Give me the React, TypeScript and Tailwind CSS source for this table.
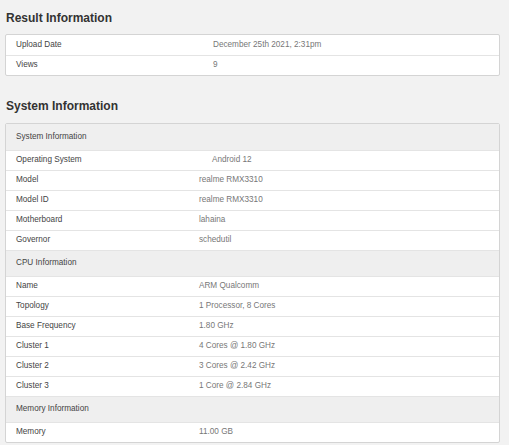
const resultRows = [
  { label: "Upload Date", value: "December 25th 2021, 2:31pm" },
  { label: "Views", value: "9" },
];

type Row = { label: string; value?: string; header?: boolean; wide?: boolean };

const systemRows: Row[] = [
  { label: "System Information", header: true },
  { label: "Operating System", value: "Android 12", wide: true },
  { label: "Model", value: "realme RMX3310" },
  { label: "Model ID", value: "realme RMX3310" },
  { label: "Motherboard", value: "lahaina" },
  { label: "Governor", value: "schedutil" },
  { label: "CPU Information", header: true },
  { label: "Name", value: "ARM Qualcomm" },
  { label: "Topology", value: "1 Processor, 8 Cores" },
  { label: "Base Frequency", value: "1.80 GHz" },
  { label: "Cluster 1", value: "4 Cores @ 1.80 GHz" },
  { label: "Cluster 2", value: "3 Cores @ 2.42 GHz" },
  { label: "Cluster 3", value: "1 Core @ 2.84 GHz" },
  { label: "Memory Information", header: true },
  { label: "Memory", value: "11.00 GB" },
];

const App = () => {
  return (
    <div className="min-h-screen bg-[#f2f2f2] pl-[5px] pr-[9px] pt-[11px] font-['Liberation_Sans',Arial,sans-serif] text-[8.2px]">
      <h2 className="pl-px text-[12px] font-bold leading-[14px] text-[#333]">Result Information</h2>
      <div className="mt-[9px] overflow-hidden rounded-[2px] border border-[#d4d4d4] bg-white">
        {resultRows.map((r, i) => (
          <div
            key={r.label}
            className={`flex h-[20px] items-center pl-[10px] ${i > 0 ? "border-t border-[#e4e4e4]" : ""}`}
          >
            <div className="w-[197px] text-[#444]">{r.label}</div>
            <div className="text-[#777]">{r.value}</div>
          </div>
        ))}
      </div>

      <h2 className="mt-[23px] pl-px text-[12px] font-bold leading-[14px] text-[#333]">System Information</h2>
      <div className="mt-[10px] overflow-hidden rounded-[2px] border border-[#d4d4d4] bg-white">
        {systemRows.map((r, i) =>
          r.header ? (
            <div
              key={r.label}
              className={`flex h-[26px] items-center bg-[#efefef] pl-[10px] text-[#444] ${i > 0 ? "border-t border-[#e4e4e4]" : ""}`}
            >
              {r.label}
            </div>
          ) : (
            <div key={r.label} className="flex h-[20px] items-center border-t border-[#e4e4e4] pl-[10px]">
              <div className={`${r.wide ? "w-[196px]" : "w-[183px]"} text-[#444]`}>{r.label}</div>
              <div className="text-[#777]">{r.value}</div>
            </div>
          )
        )}
      </div>
    </div>
  );
};

export default App;
